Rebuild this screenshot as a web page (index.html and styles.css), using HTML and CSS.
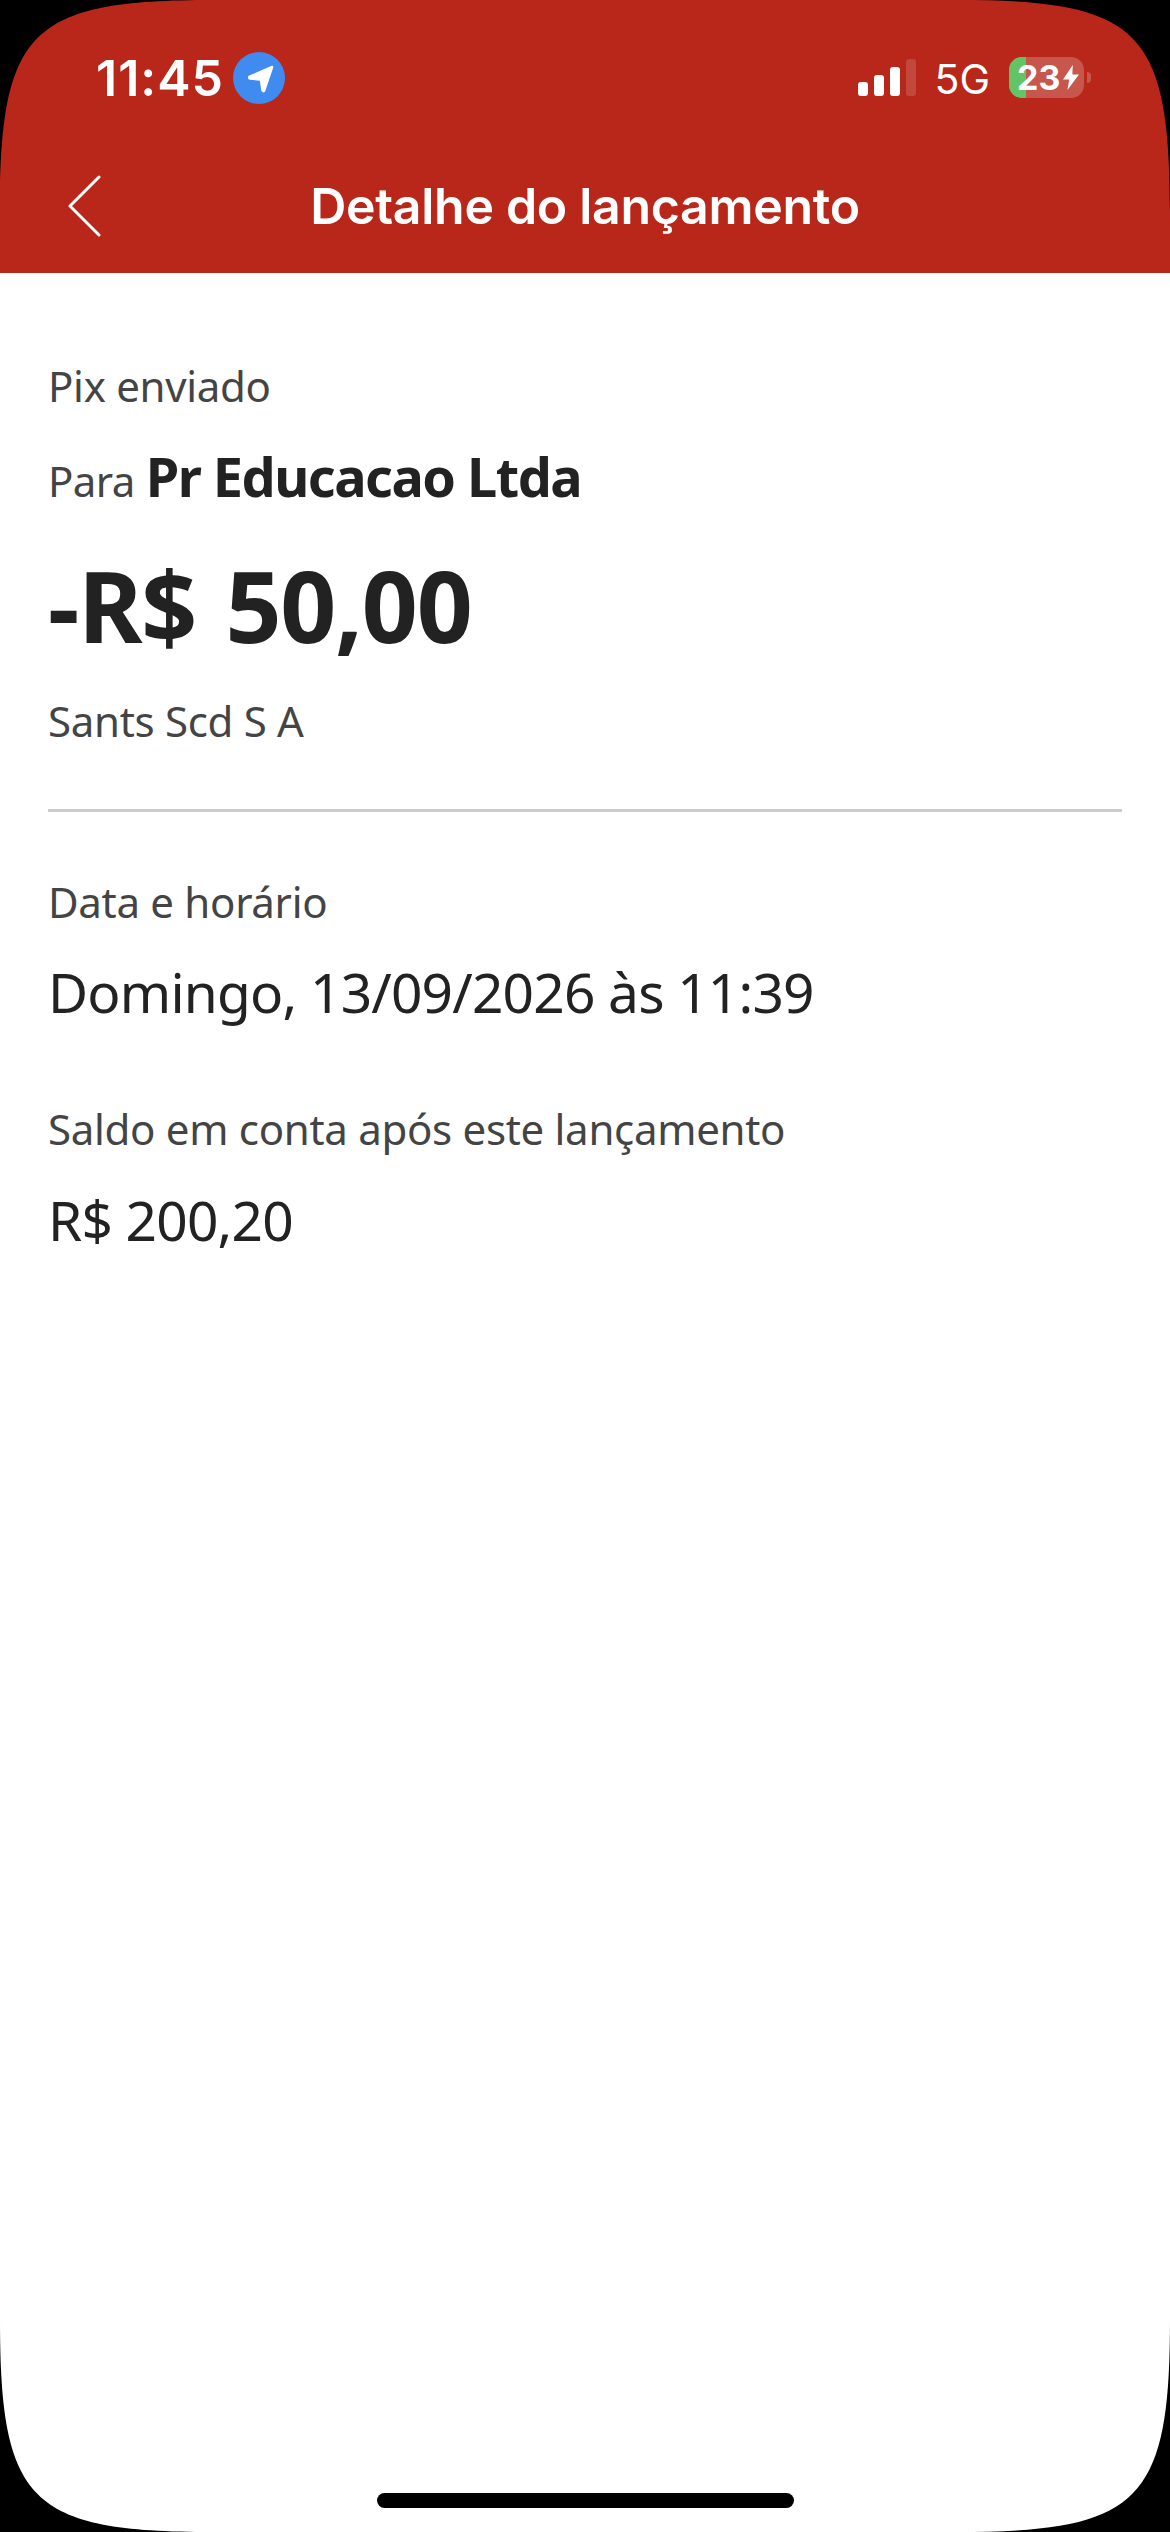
FILE: index.html
```html
<!DOCTYPE html>
<html lang="pt-BR">
<head>
<meta charset="utf-8">
<title>Detalhe do lançamento</title>
<link rel="stylesheet" href="styles.css">
</head>
<body>
<div class="screen">
  <header class="header">
    <div class="status">
      <div class="status-left">
        <span class="time">11:45</span>
        <svg class="loc" viewBox="0 0 52 52" width="52" height="52"><circle cx="26" cy="26" r="26" fill="#3f8bf0"/><path d="M39 14.500 L16 24.500 Q15 26.500 17 27 L27.500 28 L29 38.500 Q30 40.500 31.500 39 L39.500 15.500 Q39.800 14 39 14.500Z" fill="#fff" stroke="#fff" stroke-width="1.500" stroke-linejoin="round"/></svg>
      </div>
      <div class="status-right">
        <svg class="signal" viewBox="0 0 58 37" width="58" height="37"><rect x="0" y="23" width="10" height="14" rx="3" fill="#fff"/><rect x="16" y="16" width="10" height="21" rx="3" fill="#fff"/><rect x="32" y="8" width="10" height="29" rx="3" fill="#fff"/><rect x="48" y="0" width="10" height="37" rx="3" fill="#fff" opacity=".15"/></svg>
        <span class="net">5G</span>
        <div class="battery">
          <div class="battery-fill"></div>
          <span class="battery-num">23</span>
          <svg class="bolt" viewBox="0 0 18 26" width="16" height="25" preserveAspectRatio="none"><path d="M11 0 L0 15 H7 L5 26 L18 10 H10.500Z" fill="#fff"/></svg>
        </div>
        <div class="battery-nub"></div>
      </div>
    </div>
    <div class="nav">
      <svg class="back" viewBox="0 0 34 62" width="34" height="62"><path d="M31 2 L2 31 L31 60" fill="none" stroke="#fff" stroke-width="3" stroke-linecap="round" stroke-linejoin="round"/></svg>
      <h1 class="title">Detalhe do lançamento</h1>
    </div>
  </header>
  <main class="content">
    <p class="label">Pix enviado</p>
    <p class="payee"><span class="payee-prefix">Para</span><strong class="payee-name">Pr Educacao Ltda</strong></p>
    <p class="amount">-R$ 50,00</p>
    <p class="label bank">Sants Scd S A</p>
    <hr class="divider">
    <p class="label">Data e horário</p>
    <p class="value value-date">Domingo, 13/09/2026 às 11:39</p>
    <p class="label label-balance">Saldo em conta após este lançamento</p>
    <p class="value value-balance">R$ 200,20</p>
  </main>
  <div class="home-indicator"></div>
  <svg class="corners" viewBox="0 0 1170 2532" width="1170" height="2532"><path d="M0 0H213C30 0 0 30 0 213ZM1170 0V213C1170 30 1140 0 957 0ZM0 2532V2319C0 2502 30 2532 213 2532ZM1170 2532H957C1140 2532 1170 2502 1170 2319Z" fill="#000"/></svg>
</div>
</body>
</html>
```

FILE: styles.css
```css
* { box-sizing: border-box; }
html, body { margin: 0; padding: 0; background: #fff; }
.screen {
  position: relative;
  width: 1170px;
  height: 2532px;
  overflow: hidden;
  background: #fff;
  font-family: "Noto Sans", sans-serif;
}
.header {
  height: 273px;
  background: #b8271a;
  color: #fff;
  font-family: Inter, sans-serif;
  display: flex;
  flex-direction: column;
}
.status {
  height: 150px;
  padding: 52px 79px 0 96px;
  display: flex;
  justify-content: space-between;
  align-items: flex-start;
}
.status-left { display: flex; align-items: center; gap: 9px; }
.time { font-size: 50px; font-weight: 600; line-height: 52px; letter-spacing: 1px; }
.status-right { display: flex; align-items: flex-start; padding-top: 7px; }
.signal { display: block; margin-right: 18px; }
.net { font-size: 41px; font-weight: 400; line-height: 40px; margin-right: 19px; }
.battery {
  position: relative;
  width: 75px;
  height: 41px;
  margin-top: -2px;
  border-radius: 13px;
  background: rgba(255,255,255,.22);
  overflow: hidden;
  display: flex;
  align-items: center;
  padding-left: 8px;
  gap: 3px;
}
.battery-fill { position: absolute; left: 0; top: 0; bottom: 0; width: 17px; background: #63c466; }
.battery-num { position: relative; font-size: 34px; font-weight: 700; line-height: 41px; }
.bolt { position: relative; flex: none; }
.battery-nub {
  width: 4px;
  height: 11px;
  margin: 13px 0 0 3px;
  border-radius: 0 4px 4px 0;
  background: rgba(255,255,255,.22);
}
.nav {
  position: relative;
  height: 123px;
  display: flex;
  align-items: flex-start;
  justify-content: center;
}
.back { position: absolute; left: 68px; top: 25px; }
.title { margin: 0; font-size: 50px; font-weight: 600; line-height: 56px; padding-top: 28px; letter-spacing: -.3px; }

.content { padding: 85px 48px 0; }
.content p { margin: 0; }
.label { font-size: 42px; line-height: 56px; color: #444; letter-spacing: -.3px; }
.content .payee { display: flex; align-items: baseline; gap: 11px; margin-top: 26px; line-height: 72px; }
.payee-prefix { font-size: 42px; color: #444; letter-spacing: -.6px; }
.payee-name { font-size: 54px; font-weight: 700; color: #222; letter-spacing: -1.5px; }
.content .amount { margin-top: 28px; font-size: 98px; font-weight: 700; line-height: 120px; color: #222; letter-spacing: -1.2px; word-spacing: 5px; }
.content .bank { margin-top: 28px; }
.divider { height: 3px; margin: 60px 0 62px; border: 0; background: #ccc; }
.value { font-size: 55px; line-height: 72px; color: #222; letter-spacing: -.8px; }
.content .value-date { margin-top: 26px; }
.content .label-balance { margin-top: 73px; }
.content .value-balance { margin-top: 27px; }

.home-indicator {
  position: absolute;
  left: 377px;
  top: 2493px;
  width: 417px;
  height: 15px;
  border-radius: 8px;
  background: #000;
}
.corners { position: absolute; left: 0; top: 0; pointer-events: none; }
```
